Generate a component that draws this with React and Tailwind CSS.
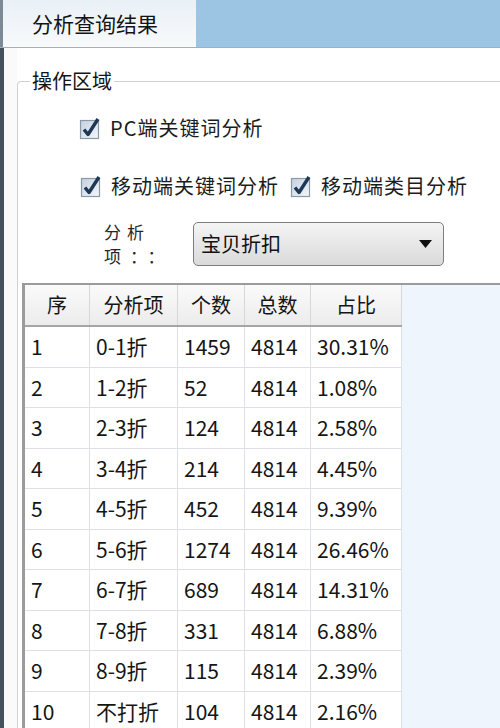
import React from 'react';

const rows = [
  ['1', '0-1折', '1459', '4814', '30.31%'],
  ['2', '1-2折', '52', '4814', '1.08%'],
  ['3', '2-3折', '124', '4814', '2.58%'],
  ['4', '3-4折', '214', '4814', '4.45%'],
  ['5', '4-5折', '452', '4814', '9.39%'],
  ['6', '5-6折', '1274', '4814', '26.46%'],
  ['7', '6-7折', '689', '4814', '14.31%'],
  ['8', '7-8折', '331', '4814', '6.88%'],
  ['9', '8-9折', '115', '4814', '2.39%'],
  ['10', '不打折', '104', '4814', '2.16%'],
];

const headers = ['序', '分析项', '个数', '总数', '占比'];
const widths = ['w-[65px]', 'w-[88px]', 'w-[67px]', 'w-[66px]', 'w-[91px]'];

const CheckBox = () => (
  <svg width="24" height="24" viewBox="0 0 24 24" className="shrink-0">
    <defs>
      <linearGradient id="cbg" x1="0" y1="0" x2="1" y2="1">
        <stop offset="0" stopColor="#c3d1de" />
        <stop offset="1" stopColor="#f4f7fa" />
      </linearGradient>
    </defs>
    <rect x="2.5" y="4.5" width="18" height="18" fill="url(#cbg)" stroke="#8c9aa8" strokeWidth="1.2" />
    <path d="M6 13.5 L10 18.5 L20 3" fill="none" stroke="#1e3757" strokeWidth="3.4" strokeLinejoin="round" />
  </svg>
);

const Check = ({ label }) => (
  <label className="flex items-center gap-[8px] text-[20px] leading-[26px] tracking-[1px] text-[#1c1c1c]">
    <CheckBox />
    <span>{label}</span>
  </label>
);

export default function App() {
  return (
    <div
      className="w-[500px] h-[728px] overflow-hidden bg-white flex flex-col"
      style={{ fontFamily: '"Noto Sans CJK SC", "Noto Sans", sans-serif' }}
    >
      {/* tab strip */}
      <div className="h-[48px] shrink-0 flex bg-[#9cc5e3] border-b border-[#8db6d6]">
        <div className="w-[196px] bg-gradient-to-b from-[#e9f0f6] to-[#f8fafc] border-l-[3px] border-[#7c8a96] flex items-center pl-[29px] text-[21px] text-[#141414]">
          分析查询结果
        </div>
      </div>

      <div className="flex-1 flex min-h-0">
        <div className="w-[4px] bg-[#44525d] shrink-0" />
        <div className="w-[13px] bg-[#fafafa] shrink-0" />

        {/* group box */}
        <div className="flex-1 mt-[19px] flex flex-col min-w-0">
          <div className="flex h-[28px] shrink-0">
            <div className="w-[13px] shrink-0 mt-[14px] h-[14px] border-t border-l border-[#cfd3d6] rounded-tl-[4px]" />
            <span className="shrink-0 px-[2px] text-[20px] leading-[28px] text-[#141414]">操作区域</span>
            <div className="flex-1 mt-[14px] border-t border-[#cfd3d6]" />
          </div>

          <div className="flex-1 flex flex-col border-l border-[#cfd3d6] min-h-0">
            <div className="pl-[60px] mt-[20px]">
              <Check label="PC端关键词分析" />
            </div>

            <div className="pl-[61px] mt-[32px] flex items-center gap-[10px]">
              <Check label="移动端关键词分析" />
              <Check label="移动端类目分析" />
            </div>

            <div className="flex items-center mt-[21px] pl-[86px]">
              <div className="text-[17px] leading-[24px] text-[#262626] w-[89px]">
                <div className="tracking-[6px]">分析</div>
                <div className="tracking-[9px]">项：：</div>
              </div>
              <div className="w-[251px] h-[44px] rounded-[5px] border border-[#7d7d7d] bg-gradient-to-b from-[#f4f4f4] to-[#dadada] flex items-center justify-between pl-[7px] pr-[11px]">
                <span className="text-[20px] text-[#111]">宝贝折扣</span>
                <svg width="13" height="8" viewBox="0 0 13 8">
                  <path d="M0 0 H13 L6.5 8 Z" fill="#111" />
                </svg>
              </div>
            </div>

            {/* grid view */}
            <div className="mt-[15px] ml-[4px] flex-1 bg-[#eef5fc] border-t-2 border-l-[3px] border-[#9b9b9b] text-[21px] text-[#151515]">
              <div className="flex h-[42px] w-[377px] bg-gradient-to-b from-[#fafafa] to-[#ececec] border-b-2 border-[#a5a5a5]">
                {headers.map((h, i) => (
                  <div key={h} className={`${widths[i]} shrink-0 border-r border-[#d7d7d7] flex items-center justify-center text-[20px]`}>
                    {h}
                  </div>
                ))}
              </div>
              {rows.map((r) => (
                <div key={r[0]} className="flex h-[40.5px] w-[377px] bg-white border-b border-[#dde1e6]">
                  {r.map((c, i) => (
                    <div key={i} className={`${widths[i]} shrink-0 border-r border-[#dde1e6] flex items-center pl-[6px]`}>
                      {c}
                    </div>
                  ))}
                </div>
              ))}
            </div>
          </div>
        </div>
      </div>
    </div>
  );
}
